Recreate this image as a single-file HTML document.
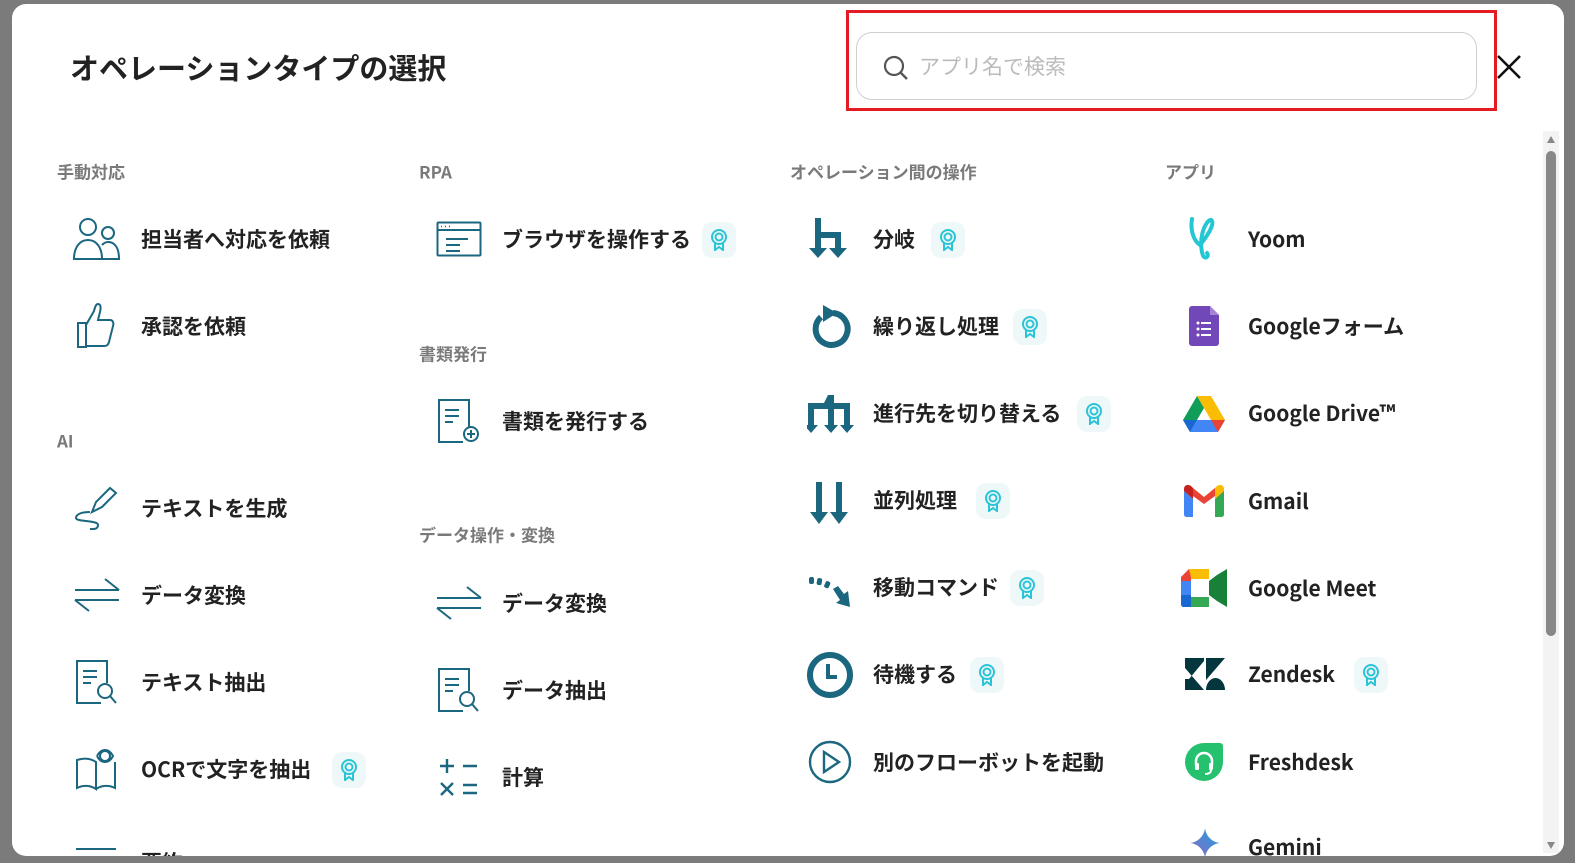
<!DOCTYPE html>
<html><head><meta charset="utf-8"><style>
*{margin:0;padding:0;box-sizing:border-box}
body{width:1575px;height:863px;background:#7b7b7b;position:relative;overflow:hidden;font-family:"Noto Sans CJK JP","Liberation Sans",sans-serif}
.modal{position:absolute;left:12px;top:4px;width:1552px;height:852px;background:#fff;border-radius:14px;overflow:hidden}
.a{position:absolute}
.t{position:absolute;font-size:21px;font-weight:bold;color:#222;transform:translateY(-50%);white-space:nowrap}
.l{position:absolute;font-size:17px;font-weight:bold;color:#7a7a7a;transform:translateY(-50%);white-space:nowrap}
.ic{position:absolute;transform:translateY(-50%)}
.bd{position:absolute;width:34px;height:36px;border-radius:10px;background:#eef8f8;transform:translateY(-50%)}
.bd svg{position:absolute;left:8px;top:7px}
</style></head><body>
<div class="modal">
<div class="a" style="left:58px;top:42px;font-size:29px;font-weight:bold;color:#222">オペレーションタイプの選択</div>
<div class="a" style="left:834px;top:6px;width:651px;height:101px;border:3px solid #e31b23"></div>
<div class="a" style="left:844px;top:28px;width:621px;height:68px;border:1px solid #cfcfcf;border-radius:16px"></div>
<svg class="a" style="left:870px;top:50px" width="28" height="28" viewBox="0 0 28 28"><circle cx="12" cy="12" r="9" fill="none" stroke="#555" stroke-width="2.2"/><line x1="18.5" y1="18.5" x2="25" y2="25" stroke="#555" stroke-width="2.4"/></svg>
<div class="a" style="left:907px;top:47px;font-size:21px;color:#bbb">アプリ名で検索</div>
<svg class="a" style="left:1484px;top:50px" width="26" height="26" viewBox="0 0 26 26"><path d="M2 2L24 24M24 2L2 24" stroke="#111" stroke-width="2.6"/></svg>
<!-- scrollbar -->
<div class="a" style="left:1531px;top:127px;width:16px;height:722px;background:#f3f3f3"></div>
<svg class="a" style="left:1534px;top:130px" width="10" height="10"><path d="M5 2L9 9H1Z" fill="#888"/></svg>
<div class="a" style="left:1534px;top:147px;width:10px;height:485px;background:#888;border-radius:5px"></div>
<svg class="a" style="left:1534px;top:837px" width="10" height="10"><path d="M1 1H9L5 8Z" fill="#888"/></svg>

<!-- col1 -->
<div class="l" style="left:45px;top:167px">手動対応</div>
<svg class="ic" style="left:60px;top:235px" width="50" height="44" viewBox="0 0 50 44" fill="none" stroke="#1b6780" stroke-width="2"><circle cx="16" cy="10" r="8"/><path d="M2 42c0-12 6-19 14-19s14 7 14 19z"/><circle cx="36" cy="16" r="6"/><path d="M30 28c2-2 4-3 6-3 7 0 11 6 11 17H30"/></svg>
<div class="t" style="left:129px;top:235px">担当者へ対応を依頼</div>
<svg class="ic" style="left:64px;top:322px" width="42" height="46" viewBox="0 0 42 46" fill="none" stroke="#1b6780" stroke-width="2"><path d="M2 20h8v24H2zM10 22l8-14c1-4 2-7 4-7 3 0 3 4 2 8l-2 8h12c3 0 4 3 3 6l-4 16c-1 3-2 4-5 4H10"/></svg>
<div class="t" style="left:129px;top:322px">承認を依頼</div>
<div class="l" style="left:45px;top:436px">AI</div>
<svg class="ic" style="left:62px;top:504px" width="46" height="44" viewBox="0 0 46 44" fill="none" stroke="#1b6780" stroke-width="2"><path d="M18 26l4-10L36 2l6 5-14 14z"/><path d="M16 26c-8 0-14 2-14 6 0 4 22 2 22 7s-6 4-8 4"/></svg>
<div class="t" style="left:129px;top:504px">テキストを生成</div>
<svg class="ic" style="left:61px;top:591px" width="48" height="34" viewBox="0 0 48 34" fill="none" stroke="#1b6780" stroke-width="2"><path d="M2 12h44M32 1l14 11M46 22H2M16 33L2 22"/></svg>
<div class="t" style="left:129px;top:591px">データ変換</div>
<svg class="ic" style="left:63px;top:678px" width="46" height="46" viewBox="0 0 46 46" fill="none" stroke="#1b6780" stroke-width="2"><path d="M26 44H2V2h30v22"/><path d="M8 12h14M8 18h14M8 24h8"/><circle cx="30" cy="32" r="7"/><path d="M35 37l6 7"/></svg>
<div class="t" style="left:129px;top:678px">テキスト抽出</div>
<svg class="ic" style="left:63px;top:765px" width="44" height="46" viewBox="0 0 44 46" fill="none" stroke="#1b6780" stroke-width="2"><path d="M2 14v28c6-3 13-3 19 1V16C15 12 8 12 2 14zM21 43c6-4 13-4 19-1V16"/><circle cx="30" cy="10" r="5"/><path d="M22 10c4-8 12-8 16 0-4 8-12 8-16 0"/></svg>
<div class="t" style="left:129px;top:765px">OCRで文字を抽出</div>
<div class="bd" style="left:320px;top:766px"><svg width="18" height="22" viewBox="0 0 18 22" fill="none" stroke="#2bc4d6" stroke-width="2"><circle cx="9" cy="8" r="7"/><circle cx="9" cy="8" r="3.5"/><path d="M5 14v7l4-3 4 3v-7"/></svg></div>
<svg class="ic" style="left:64px;top:846px" width="40" height="10"><path d="M0 4h40" stroke="#1b6780" stroke-width="2"/></svg>
<div class="t" style="left:129px;top:858px">要約</div>

<!-- col2 -->
<div class="l" style="left:407px;top:167px">RPA</div>
<svg class="ic" style="left:424px;top:235px" width="46" height="36" viewBox="0 0 46 36" fill="none" stroke="#1b6780" stroke-width="2"><rect x="1.5" y="1.5" width="43" height="33" rx="1"/><path d="M1.5 9h43M10 18h22M10 24h14M10 30h14"/><path d="M5 5.5h1M9 5.5h1M13 5.5h1" stroke-width="1.6"/></svg>
<div class="t" style="left:490px;top:235px">ブラウザを操作する</div>
<div class="bd" style="left:690px;top:236px"><svg width="18" height="22" viewBox="0 0 18 22" fill="none" stroke="#2bc4d6" stroke-width="2"><circle cx="9" cy="8" r="7"/><circle cx="9" cy="8" r="3.5"/><path d="M5 14v7l4-3 4 3v-7"/></svg></div>
<div class="l" style="left:407px;top:349px">書類発行</div>
<svg class="ic" style="left:425px;top:417px" width="44" height="46" viewBox="0 0 44 46" fill="none" stroke="#1b6780" stroke-width="2"><path d="M26 44H2V2h30v28"/><path d="M8 12h14M8 18h14M8 24h8"/><circle cx="34" cy="36" r="7"/><path d="M34 32v8M30 36h8"/></svg>
<div class="t" style="left:490px;top:417px">書類を発行する</div>
<div class="l" style="left:407px;top:530px">データ操作・変換</div>
<svg class="ic" style="left:423px;top:599px" width="48" height="34" viewBox="0 0 48 34" fill="none" stroke="#1b6780" stroke-width="2"><path d="M2 12h44M32 1l14 11M46 22H2M16 33L2 22"/></svg>
<div class="t" style="left:490px;top:599px">データ変換</div>
<svg class="ic" style="left:425px;top:686px" width="46" height="46" viewBox="0 0 46 46" fill="none" stroke="#1b6780" stroke-width="2"><path d="M26 44H2V2h30v22"/><path d="M8 12h14M8 18h14M8 24h8"/><circle cx="30" cy="32" r="7"/><path d="M35 37l6 7"/></svg>
<div class="t" style="left:490px;top:686px">データ抽出</div>
<svg class="ic" style="left:427px;top:773px" width="42" height="40" viewBox="0 0 42 40" fill="none" stroke="#1b6780" stroke-width="2.4"><path d="M8 2v14M1 9h14M24 9h14M2 26l12 12M14 26L2 38M24 28h14M24 36h14"/></svg>
<div class="t" style="left:490px;top:773px">計算</div>

<!-- col3 -->
<div class="l" style="left:778px;top:167px">オペレーション間の操作</div>
<svg class="ic" style="left:796px;top:235px" width="44" height="42" viewBox="0 0 44 42" fill="#1b6780"><path d="M7 0h6v14h20v16h6l-9 10-9-10h6V20H13v10h6l-9 10-9-10h6z"/></svg>
<div class="t" style="left:861px;top:235px">分岐</div>
<div class="bd" style="left:919px;top:236px"><svg width="18" height="22" viewBox="0 0 18 22" fill="none" stroke="#2bc4d6" stroke-width="2"><circle cx="9" cy="8" r="7"/><circle cx="9" cy="8" r="3.5"/><path d="M5 14v7l4-3 4 3v-7"/></svg></div>
<svg class="ic" style="left:797px;top:322px" width="42" height="46" viewBox="0 0 42 46" fill="none"><path d="M12 14a16 16 0 1 0 12-4" stroke="#1b6780" stroke-width="6"/><path d="M14 2l14 8-14 9z" fill="#1b6780"/></svg>
<div class="t" style="left:861px;top:322px">繰り返し処理</div>
<div class="bd" style="left:1001px;top:323px"><svg width="18" height="22" viewBox="0 0 18 22" fill="none" stroke="#2bc4d6" stroke-width="2"><circle cx="9" cy="8" r="7"/><circle cx="9" cy="8" r="3.5"/><path d="M5 14v7l4-3 4 3v-7"/></svg></div>
<svg class="ic" style="left:795px;top:411px" width="48" height="40" viewBox="0 0 48 40" fill="#1b6780"><path d="M21 0h6v8h16v22h4l-7 8-7-8h4V14H27v16h4l-7 8-7-8h4V14H7v16h4l-7 8-7-8h4V8h16z"/></svg>
<div class="t" style="left:861px;top:409px">進行先を切り替える</div>
<div class="bd" style="left:1065px;top:410px"><svg width="18" height="22" viewBox="0 0 18 22" fill="none" stroke="#2bc4d6" stroke-width="2"><circle cx="9" cy="8" r="7"/><circle cx="9" cy="8" r="3.5"/><path d="M5 14v7l4-3 4 3v-7"/></svg></div>
<svg class="ic" style="left:797px;top:500px" width="42" height="44" viewBox="0 0 42 44" fill="#1b6780"><path d="M7 0h6v30h6l-9 12-9-12h6zM27 0h6v30h6l-9 12-9-12h6z"/></svg>
<div class="t" style="left:861px;top:496px">並列処理</div>
<div class="bd" style="left:964px;top:497px"><svg width="18" height="22" viewBox="0 0 18 22" fill="none" stroke="#2bc4d6" stroke-width="2"><circle cx="9" cy="8" r="7"/><circle cx="9" cy="8" r="3.5"/><path d="M5 14v7l4-3 4 3v-7"/></svg></div>
<svg class="ic" style="left:797px;top:588px" width="44" height="34" viewBox="0 0 44 34" fill="#1b6780"><rect x="0" y="2" width="5" height="7" rx="2"/><rect x="8" y="3" width="5" height="7" rx="2" transform="rotate(10 10 6)"/><rect x="16" y="6" width="5" height="7" rx="2" transform="rotate(25 18 9)"/><path d="M24 14l5-3 6 8 4-3 2 16-14-4 4-3z"/></svg>
<div class="t" style="left:861px;top:583px">移動コマンド</div>
<div class="bd" style="left:998px;top:584px"><svg width="18" height="22" viewBox="0 0 18 22" fill="none" stroke="#2bc4d6" stroke-width="2"><circle cx="9" cy="8" r="7"/><circle cx="9" cy="8" r="3.5"/><path d="M5 14v7l4-3 4 3v-7"/></svg></div>
<svg class="ic" style="left:794px;top:671px" width="48" height="48" viewBox="0 0 48 48" fill="none" stroke="#1b6780"><circle cx="24" cy="24" r="20" stroke-width="6"/><path d="M22 13v13h9" stroke-width="4"/></svg>
<div class="t" style="left:861px;top:670px">待機する</div>
<div class="bd" style="left:958px;top:671px"><svg width="18" height="22" viewBox="0 0 18 22" fill="none" stroke="#2bc4d6" stroke-width="2"><circle cx="9" cy="8" r="7"/><circle cx="9" cy="8" r="3.5"/><path d="M5 14v7l4-3 4 3v-7"/></svg></div>
<svg class="ic" style="left:795px;top:758px" width="46" height="46" viewBox="0 0 46 46" fill="none" stroke="#1b6780" stroke-width="2.4"><circle cx="23" cy="23" r="20"/><path d="M17 13v20l15-10z"/></svg>
<div class="t" style="left:861px;top:758px">別のフローボットを起動</div>

<!-- col4 -->
<div class="l" style="left:1153px;top:167px">アプリ</div>
<svg class="ic" style="left:1175px;top:235px" width="32" height="48" viewBox="0 0 32 48" fill="none" stroke="#22c7d3" stroke-width="4" stroke-linecap="round"><path d="M5 4c-2 12 2 22 8 26 8-10 14-20 12-24-2-4-8 4-10 14-2 10 0 20 2 22 3 2 5-2 3-4"/></svg>
<div class="t" style="left:1236px;top:235px">Yoom</div>
<svg class="ic" style="left:1177px;top:322px" width="30" height="40" viewBox="0 0 30 40"><path d="M3 0h18l9 9v28a3 3 0 0 1-3 3H3a3 3 0 0 1-3-3V3a3 3 0 0 1 3-3z" fill="#7248b9"/><path d="M21 0v9h9z" fill="#a584d8"/><g fill="#fff"><circle cx="9" cy="17" r="1.5"/><circle cx="9" cy="23" r="1.5"/><circle cx="9" cy="29" r="1.5"/><rect x="12" y="16" width="10" height="2"/><rect x="12" y="22" width="10" height="2"/><rect x="12" y="28" width="10" height="2"/></g></svg>
<div class="t" style="left:1236px;top:322px">Googleフォーム</div>
<svg class="ic" style="left:1171px;top:410px" width="42" height="36" viewBox="0 0 42 36"><path d="M14 0h14l14 24H28z" fill="#fbbc04"/><path d="M14 0L0 24l7 12 14-24z" fill="#0f9d58"/><path d="M7 36h28l7-12H14z" fill="#4285f4"/><path d="M35 36l7-12H28z" fill="#ea4335"/><path d="M0 24h14L7 36z" fill="#1967d2"/></svg>
<div class="t" style="left:1236px;top:409px">Google Drive™</div>
<svg class="ic" style="left:1172px;top:497px" width="40" height="32" viewBox="0 0 40 32"><path d="M0 4v25c0 2 1 3 3 3h6V14L0 6z" fill="#4285f4"/><path d="M31 32h6c2 0 3-1 3-3V4l-9 10z" fill="#34a853"/><path d="M0 4c0-4 4-5 7-3l2 2v11L0 6z" fill="#c5221f"/><path d="M40 4c0-4-4-5-7-3l-2 2v11l9-8z" fill="#fbbc04"/><path d="M9 3l11 9 11-9v8L20 19 9 11z" fill="#ea4335"/></svg>
<div class="t" style="left:1236px;top:497px">Gmail</div>
<svg class="ic" style="left:1169px;top:584px" width="46" height="38" viewBox="0 0 46 38"><path d="M8 0h20v10H10v-2z" fill="#fbbc04"/><path d="M8 0L0 8v4h10V8z" fill="#ea4335"/><path d="M0 12h10v14H0z" fill="#4285f4"/><path d="M0 26h10v12H3c-2 0-3-1-3-3z" fill="#1967d2"/><path d="M10 28h18v10H10z" fill="#34a853"/><path d="M28 12l8-6 10-6v38l-10-6-8-6z" fill="#188038"/><path d="M28 10v18H10v-18z" fill="#fff"/></svg>
<div class="t" style="left:1236px;top:584px">Google Meet</div>
<svg class="ic" style="left:1173px;top:670px" width="40" height="32" viewBox="0 0 40 32" fill="#03363d"><path d="M0 0h19v3L4 21H0zM0 32h19L0 10zM21 0h19L21 22z"/><path d="M21 32h19c0-6-4-12-9.5-12S21 26 21 32z" transform="translate(0,0)"/></svg>
<div class="t" style="left:1236px;top:670px">Zendesk</div>
<div class="bd" style="left:1342px;top:671px"><svg width="18" height="22" viewBox="0 0 18 22" fill="none" stroke="#2bc4d6" stroke-width="2"><circle cx="9" cy="8" r="7"/><circle cx="9" cy="8" r="3.5"/><path d="M5 14v7l4-3 4 3v-7"/></svg></div>
<svg class="ic" style="left:1173px;top:758px" width="38" height="38" viewBox="0 0 38 38"><path d="M19 0h16a3 3 0 0 1 3 3v16A19 19 0 1 1 19 0z" fill="#25c16f"/><path d="M11 22v-4a8 8 0 0 1 16 0v4" fill="none" stroke="#fff" stroke-width="2.5"/><rect x="10" y="20" width="4" height="7" rx="1.5" fill="#fff"/><rect x="24" y="20" width="4" height="7" rx="1.5" fill="#fff"/><path d="M26 27c0 3-3 4-6 4" stroke="#fff" stroke-width="2" fill="none"/></svg>
<div class="t" style="left:1236px;top:758px">Freshdesk</div>
<svg class="a" style="left:1173px;top:824px" width="40" height="30" viewBox="0 0 40 40"><defs><linearGradient id="g" x1="0" y1="1" x2="1" y2="0"><stop offset="0" stop-color="#9168c0"/><stop offset="1" stop-color="#1ba1e3"/></linearGradient></defs><path d="M20 0c1 10 9 19 20 20-11 1-19 10-20 20-1-10-9-19-20-20 11-1 19-10 20-20z" fill="url(#g)"/></svg>
<div class="a" style="left:1236px;top:828px;font-size:21px;font-weight:bold;color:#222">Gemini</div>
</div>
</body></html>
